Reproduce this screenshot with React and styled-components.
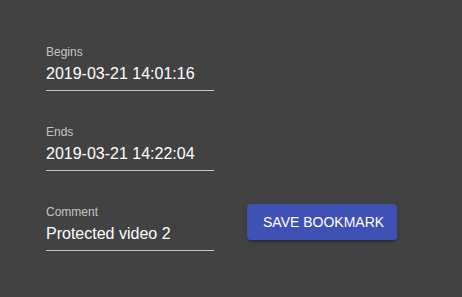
import React from "react";
import styled, { createGlobalStyle } from "styled-components";

const Global = createGlobalStyle`
  html, body { margin: 0; padding: 0; background: #424242; }
  body { font-family: "Liberation Sans", Arial, sans-serif; }
`;

const Page = styled.div`
  width: 462px;
  height: 297px;
  box-sizing: border-box;
  padding: 46px 0 0 46px;
  background: #424242;
  display: flex;
  flex-direction: column;
  gap: 35px;
`;

const Row = styled.div`
  display: flex;
  align-items: flex-start;
  gap: 33px;
`;

const Field = styled.div`
  width: 168px;
  display: flex;
  flex-direction: column;
`;

const Label = styled.label`
  font-size: 12px;
  line-height: 12px;
  color: rgba(255, 255, 255, 0.7);
`;

const Value = styled.div`
  font-size: 16px;
  line-height: 19px;
  padding: 6px 0 7px;
  color: #fff;
  border-bottom: 1px solid rgba(255, 255, 255, 0.7);
  white-space: nowrap;
`;

const Button = styled.button`
  margin-top: -2px;
  width: 150px;
  height: 36px;
  padding: 0 16px;
  border: none;
  border-radius: 4px;
  background: #3f51b5;
  color: #fff;
  font-family: "Liberation Sans", Arial, sans-serif;
  font-size: 14px;
  line-height: 36px;
  text-transform: uppercase;
  white-space: nowrap;
  box-shadow: 0 3px 1px -2px rgba(0, 0, 0, 0.2), 0 2px 2px 0 rgba(0, 0, 0, 0.14),
    0 1px 5px 0 rgba(0, 0, 0, 0.12);
  cursor: pointer;
`;

function TextField({ label, value }) {
  return (
    <Field>
      <Label>{label}</Label>
      <Value>{value}</Value>
    </Field>
  );
}

export default function App() {
  return (
    <>
      <Global />
      <Page>
        <TextField label="Begins" value="2019-03-21 14:01:16" />
        <TextField label="Ends" value="2019-03-21 14:22:04" />
        <Row>
          <TextField label="Comment" value="Protected video 2" />
          <Button>Save Bookmark</Button>
        </Row>
      </Page>
    </>
  );
}
